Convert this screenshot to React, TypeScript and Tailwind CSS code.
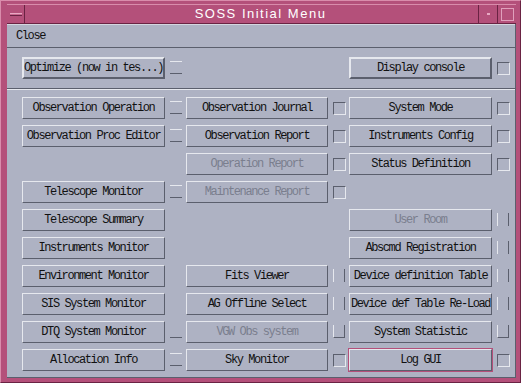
import clsx from "clsx";

type Kind = "eq" | "box" | "bars" | "cup" | "under" | "none";
type Cell = { label: string; kind: Kind; off?: boolean; focus?: boolean } | null;

const rows: Cell[][] = [
  [
    { label: "Observation Operation", kind: "eq" },
    { label: "Observation Journal", kind: "box" },
    { label: "System Mode", kind: "box" },
  ],
  [
    { label: "Observation Proc Editor", kind: "eq" },
    { label: "Observation Report", kind: "box" },
    { label: "Instruments Config", kind: "box" },
  ],
  [
    null,
    { label: "Operation Report", kind: "box", off: true },
    { label: "Status Definition", kind: "box" },
  ],
  [
    { label: "Telescope Monitor", kind: "eq" },
    { label: "Maintenance Report", kind: "box", off: true },
    null,
  ],
  [
    { label: "Telescope Summary", kind: "none" },
    null,
    { label: "User Room", kind: "bars", off: true },
  ],
  [
    { label: "Instruments Monitor", kind: "none" },
    null,
    { label: "Abscmd Registration", kind: "bars" },
  ],
  [
    { label: "Environment Monitor", kind: "none" },
    { label: "Fits Viewer", kind: "bars" },
    { label: "Device definition Table", kind: "bars" },
  ],
  [
    { label: "SIS System Monitor", kind: "none" },
    { label: "AG Offline Select", kind: "bars" },
    { label: "Device def Table Re-Load", kind: "bars" },
  ],
  [
    { label: "DTQ System Monitor", kind: "under" },
    { label: "VGW Obs system", kind: "cup", off: true },
    { label: "System Statistic", kind: "cup" },
  ],
  [
    { label: "Allocation Info", kind: "eq" },
    { label: "Sky Monitor", kind: "box" },
    { label: "Log GUI", kind: "box", focus: true },
  ],
];

const mono = "font-['Liberation_Mono',monospace] text-[12px] tracking-[-1.4px]";

function Indicator({ kind }: { kind: Kind }) {
  if (kind === "none") return <div />;
  return (
    <div className="h-[22px] pl-[1px]">
      {kind === "eq" && (
        <div className="mt-[4px] h-[13px] w-[12px] border-t border-b border-t-[#e6e8ee] border-b-[#5b5f6d]" />
      )}
      {kind === "under" && (
        <div className="mt-[4px] h-[13px] w-[12px] border-b border-b-[#5b5f6d]" />
      )}
      {kind === "box" && (
        <div className="mt-[5px] h-[13px] w-[13px] border border-t-[#5b5f6d] border-l-[#5b5f6d] border-b-[#e6e8ee] border-r-[#e6e8ee]" />
      )}
      {kind === "bars" && (
        <div className="mt-[4px] h-[13px] w-[12px] border-l border-r border-l-[#e6e8ee] border-r-[#5b5f6d]" />
      )}
      {kind === "cup" && (
        <div className="mt-[4px] h-[13px] w-[12px] border-l border-r border-b border-l-[#e6e8ee] border-r-[#5b5f6d] border-b-[#5b5f6d]" />
      )}
    </div>
  );
}

function Btn({ label, off, focus, heavy }: { label: string; off?: boolean; focus?: boolean; heavy?: boolean }) {
  return (
    <div
      className={clsx(
        "flex h-[22px] items-center justify-center overflow-hidden whitespace-nowrap border-t-[#e6e8ee] border-l-[#e6e8ee] border-b-[#5b5f6d] border-r-[#5b5f6d]",
        mono,
        heavy ? "border-2" : "border",
        off ? "text-[#7a7e8e]" : "text-[#111]",
        focus && "outline outline-1 outline-[#b4507a]"
      )}
    >
      {label}
    </div>
  );
}

export default function App() {
  return (
    <div className="flex h-[383px] w-[521px] flex-col border border-t-[#d98cab] border-l-[#d98cab] border-b-[#6a2343] border-r-[#6a2343] bg-[#b4507a] pt-[3px] pl-[6px] pr-[4px] pb-[4px]">
      {/* title bar */}
      <div className="flex h-[20px] border-t border-b border-t-[#d98cab] border-b-[#6a2343]">
        <div className="flex w-[18px] items-center justify-center border-r border-r-[#6a2343]">
          <div className="h-[3px] w-[12px] border-t border-b border-t-[#e8a8c2] border-b-[#6a2343] bg-[#c86890]" />
        </div>
        <div className="flex flex-1 items-center justify-center pl-[18px] font-['Liberation_Sans',Arial,sans-serif] text-[13px] tracking-[1.5px] text-white">
          SOSS Initial Menu
        </div>
        <div className="flex w-[19px] items-center justify-center border-l border-l-[#6a2343]">
          <div className="h-[2px] w-[3px] bg-[#e8a8c2]" />
        </div>
        <div className="flex w-[19px] items-center justify-center border-l border-l-[#6a2343]">
          <div className="h-[13px] w-[13px] border border-[#e0a0bc]" />
        </div>
      </div>

      {/* client area */}
      <div className="flex flex-1 flex-col border-r border-b border-r-[#5b5f6d] border-b-[#5b5f6d] bg-[#aeb2c3]">
        <div className={clsx("flex h-[24px] items-center border-t border-b border-t-[#d4d7e0] border-b-[#5b5f6d] pl-[9px] text-[#111]", mono)}>
          Close
        </div>

        <div className="grid h-[40px] grid-cols-[143px_13px_142px_13px_143px_13px] items-center gap-x-[4px] pl-[15px]">
          <Btn label="Optimize (now in tes...)" heavy />
          <Indicator kind="eq" />
          <div />
          <div />
          <Btn label="Display console" heavy />
          <Indicator kind="box" />
        </div>

        <div className="h-[2px] border-t border-b border-t-[#5b5f6d] border-b-[#e6e8ee]" />

        <div className="grid grid-cols-[143px_13px_142px_13px_143px_13px] gap-x-[4px] gap-y-[6px] pt-[7px] pl-[15px]">
          {rows.map((row, r) =>
            row.map((cell, c) =>
              cell ? (
                [
                  <Btn key={`b${r}-${c}`} label={cell.label} off={cell.off} focus={cell.focus} />,
                  <Indicator key={`i${r}-${c}`} kind={cell.kind} />,
                ]
              ) : (
                [<div key={`b${r}-${c}`} className="h-[22px]" />, <div key={`i${r}-${c}`} />]
              )
            )
          )}
        </div>
      </div>
    </div>
  );
}
